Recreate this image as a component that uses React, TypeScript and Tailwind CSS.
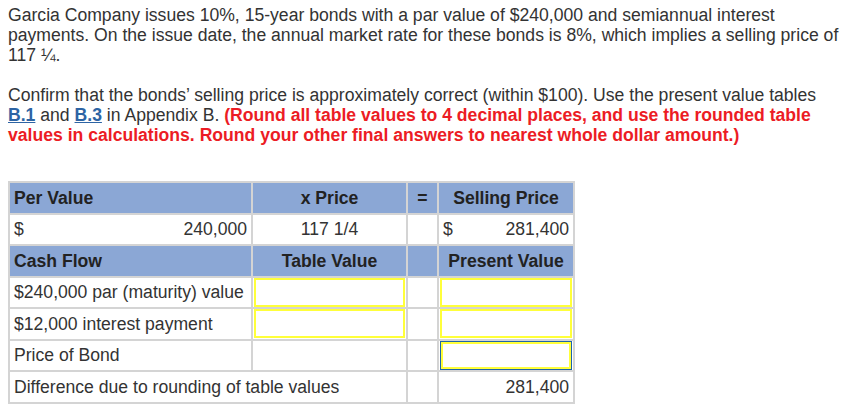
import React from 'react';

const hd = 'bg-[#8ba7d5] font-bold text-[#222]';
const cell = 'border-2 border-[#d4d4d4] px-1 h-[31.5px] p-0';
const inputCell = 'border-2 border-[#d4d4d4] p-0 h-[31.5px]';

const YellowBox = ({ focused = false }: { focused?: boolean }) => (
  <div className={focused ? 'mx-[1px] h-[29px] border border-[#1e64aa]' : 'mx-[1px] h-[29px]'}>
    <div className="h-full border-2 border-[#ffff3a]" />
  </div>
);

const App = () => {
  return (
    <div className="w-[841px] h-[410px] bg-white text-[#333] text-[17.6px] leading-[20px] pl-2 pt-[5px]" style={{ fontFamily: '"Liberation Sans", Arial, sans-serif' }}>
      <p>
        Garcia Company issues 10%, 15-year bonds with a par value of $240,000 and semiannual interest payments. On the issue date, the annual market rate for these bonds is 8%, which implies a selling price of 117 ¼.
      </p>
      <p className="mt-[20px]">
        Confirm that the bonds’ selling price is approximately correct (within $100). Use the present value tables{' '}
        <a className="text-[#2d64a4] font-bold underline">B.1</a> and{' '}
        <a className="text-[#2d64a4] font-bold underline">B.3</a> in Appendix B.{' '}
        <span className="text-[#ec1c24] font-bold">
          (Round all table values to 4 decimal places, and use the rounded table values in calculations. Round your other final answers to nearest whole dollar amount.)
        </span>
      </p>

      <table className="mt-[36px] border-collapse w-[565px] table-fixed">
        <colgroup>
          <col className="w-[243px]" />
          <col className="w-[155px]" />
          <col className="w-[31px]" />
          <col className="w-[136px]" />
        </colgroup>
        <tbody>
          <tr className={hd}>
            <td className={cell}>Per Value</td>
            <td className={`${cell} text-center`}>x Price</td>
            <td className={`${cell} text-center`}>=</td>
            <td className={`${cell} text-center`}>Selling Price</td>
          </tr>
          <tr>
            <td className={cell}>
              <div className="flex justify-between">
                <span>$</span>
                <span>240,000</span>
              </div>
            </td>
            <td className={`${cell} text-center`}>117 1/4</td>
            <td className={cell}></td>
            <td className={cell}>
              <div className="flex justify-between">
                <span>$</span>
                <span>281,400</span>
              </div>
            </td>
          </tr>
          <tr className={hd}>
            <td className={cell}>Cash Flow</td>
            <td className={`${cell} text-center`}>Table Value</td>
            <td className={cell}></td>
            <td className={`${cell} text-center`}>Present Value</td>
          </tr>
          <tr>
            <td className={cell}>$240,000 par (maturity) value</td>
            <td className={inputCell}><YellowBox /></td>
            <td className={cell}></td>
            <td className={inputCell}><YellowBox /></td>
          </tr>
          <tr>
            <td className={cell}>$12,000 interest payment</td>
            <td className={inputCell}><YellowBox /></td>
            <td className={cell}></td>
            <td className={inputCell}><YellowBox /></td>
          </tr>
          <tr>
            <td className={cell}>Price of Bond</td>
            <td className={cell}></td>
            <td className={cell}></td>
            <td className={inputCell}><YellowBox focused /></td>
          </tr>
          <tr>
            <td className={cell} colSpan={2}>Difference due to rounding of table values</td>
            <td className={cell}></td>
            <td className={`${cell} text-right`}>281,400</td>
          </tr>
        </tbody>
      </table>
    </div>
  );
};

export default App;
